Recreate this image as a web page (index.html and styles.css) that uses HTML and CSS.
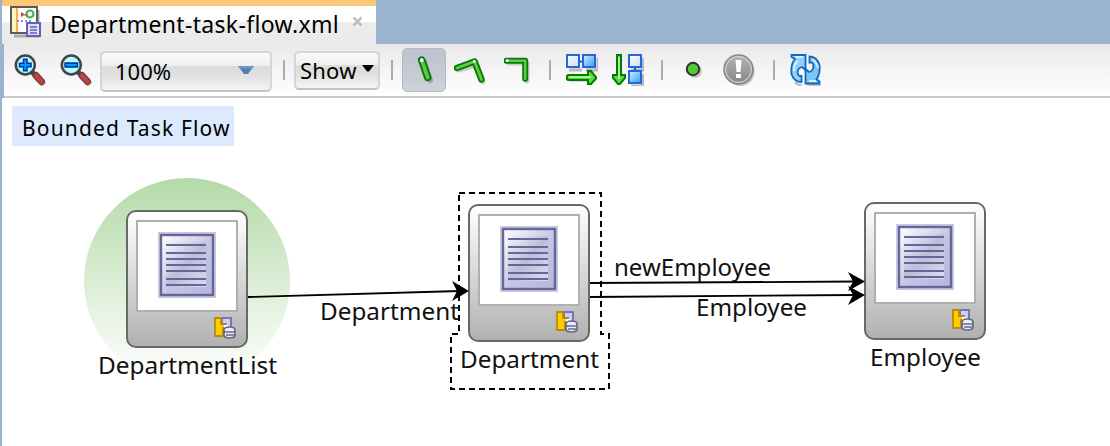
FILE: index.html
```html
<!DOCTYPE html>
<html lang="en">
<head>
<meta charset="utf-8">
<title>Department-task-flow.xml</title>
<link rel="stylesheet" href="styles.css">
</head>
<body>
<svg class="defs" aria-hidden="true">
  <defs>
    <linearGradient id="page" x1="0" y1="0" x2="1" y2="1"><stop offset="0" stop-color="#fff"/><stop offset=".55" stop-color="#c4c4e2"/><stop offset="1" stop-color="#b5b5df"/></linearGradient>
    <linearGradient id="lines" x1="0" y1="0" x2="1" y2="1"><stop offset="0" stop-color="#f5f5fc"/><stop offset=".5" stop-color="#bdbdda"/><stop offset="1" stop-color="#dcdcf0"/></linearGradient>
    <linearGradient id="blue" x1="0" y1="0" x2="1" y2="1"><stop offset="0" stop-color="#d8efff"/><stop offset="1" stop-color="#2d9dfa"/></linearGradient>
    <linearGradient id="pale" x1="0" y1="0" x2="1" y2="1"><stop offset="0" stop-color="#fff"/><stop offset="1" stop-color="#cbdcfb"/></linearGradient>
    <linearGradient id="grey" x1="0" y1="0" x2="0" y2="1"><stop offset="0" stop-color="#b5b5b5"/><stop offset="1" stop-color="#858585"/></linearGradient>
    <symbol id="document" viewBox="0 0 58 66">
      <rect width="58" height="66" fill="#c9c9e2"/>
      <rect x="3" y="3" width="52" height="60" fill="url(#page)" stroke="#666699" stroke-width="2.4"/>
      <rect x="8" y="10" width="40" height="45" fill="url(#lines)"/>
      <path d="M8 13h40M8 21h40M8 27h40M8 33h40M8 39h40M8 47h40M8 53h40" stroke="#666699" stroke-width="2"/>
    </symbol>
    <symbol id="badge" viewBox="0 0 22 22">
      <path d="M8 1h9v10H8z" fill="#ccccff" stroke="#7777aa" stroke-width="2"/>
      <path d="M1 1h6v6h5v4H9v8H1z" fill="#ffcc00" stroke="#b98a12" stroke-width="1.8"/>
      <path d="M10 8h4v5h-4z" fill="#fff"/>
      <path d="M10 13q0-3 5.500-3t5.500 3v5q0 3-5.500 3t-5.500-3z" fill="#ececf8" stroke="#66668c" stroke-width="1.700"/>
      <path d="M10 15h11M12 18h8" stroke="#66668c" stroke-width="1.500"/>
    </symbol>
    <symbol id="lens" viewBox="0 0 32 32">
      <path d="M21 22l9 9" stroke="#c0c0c0" stroke-width="6"/>
      <path d="M18 18l4 4" stroke="#444" stroke-width="5"/>
      <path d="M22 21.500l5.500 6" stroke="#6d3939" stroke-width="7" stroke-linecap="round"/><path d="M22 21.500l5.500 6" stroke="#bd4343" stroke-width="4.500" stroke-linecap="round"/>
      <circle cx="11.300" cy="11" r="9.500" fill="#b5fbff" stroke="#3d4545" stroke-width="2.500"/>
    </symbol>
  </defs>
</svg>
<div class="window">
  <header class="tabs">
    <div class="tab">
      <svg class="file-icon" viewBox="0 0 32 32">
        <path d="M4 30h24V4" fill="none" stroke="#aaa" stroke-width="3"/>
        <path d="M1 1h26v26H1z" fill="#fff" stroke="#5b5b5b" stroke-width="2"/>
        <path d="M2 2h5v24H2z" fill="#fff3b8"/><path d="M7 2v24" stroke="#f7aa5b" stroke-width="2"/>
        <path d="M11 6l4 2.500-4 2.500z" fill="#ec3a38"/><path d="M14 9l3-2v4z" fill="#ec3a38"/>
        <circle cx="20" cy="8" r="3.500" fill="#eaf9ea" stroke="#4db256" stroke-width="2.200"/>
        <path d="M7 15h14" stroke="#7793ee" stroke-width="2" stroke-dasharray="2 2"/>
        <path d="M17 17h13v13H17z" fill="#dedeff" stroke="#6262b0" stroke-width="2"/>
        <path d="M20 21h7M20 24h7M20 27h7" stroke="#6262b0" stroke-width="1.500"/>
      </svg>
      <span class="tab-title">Department-task-flow.xml</span>
      <svg class="close" viewBox="0 0 14 12"><path d="M2.500 1.500l8 8M10.500 1.500l-8 8" stroke="#bfbfbf" stroke-width="2.500"/></svg>
    </div>
  </header>

  <div class="toolbar">
    <svg class="icon zoom-in" viewBox="0 0 32 32">
      <use href="#lens"/>
      <path d="M11.300 4.500v13M4.800 11h13" stroke="#0036a5" stroke-width="5"/><path d="M11.300 6v10M6.300 11h10" stroke="#009fff" stroke-width="2"/>
    </svg>
    <svg class="icon zoom-out" viewBox="0 0 32 32">
      <use href="#lens"/>
      <path d="M4.300 11h14" stroke="#0036a5" stroke-width="5.500"/><path d="M5.800 11h11" stroke="#009fff" stroke-width="2"/>
    </svg>
    <div class="combo"><span class="combo-value">100%</span><svg class="combo-arrow" viewBox="0 0 16 8"><path d="M0 0h16l-6 8H6z" fill="#557db6"/><path d="M0 0h16l-2 2.500H2z" fill="#7196c6"/></svg></div>
    <i class="divider"></i>
    <div class="show"><span class="show-text">Show</span><svg class="show-arrow" viewBox="0 0 12 7"><path d="M0 0h12L7 6.500H5z"/></svg></div>
    <i class="divider"></i>
    <div class="selected">
      <svg class="icon stroke-icon" viewBox="0 0 32 32"><path d="M16 8l6 18" stroke="#9ba1ae" stroke-width="6"/><path d="M13.700 6l6 17.500" stroke="#087908" stroke-width="7.500"/><path d="M13.700 6l6 17.500" stroke="#5dc944" stroke-width="3.800"/><path d="M13.700 6v.5" stroke="#fff" stroke-width="3.500"/></svg>
    </div>
    <svg class="icon bend stroke-icon" viewBox="0 0 32 32"><path d="M5 16l18-5 6 17" stroke="#ccc" stroke-width="5"/><path d="M3 14l17.500-6.500L27.500 25.500" stroke="#087908" stroke-width="6.500"/><path d="M3 14l17.500-6.500L27.500 25.500" stroke="#5dcc43" stroke-width="2.800"/><path d="M20 7.500h.5" stroke="#fff" stroke-width="2.500"/></svg>
    <svg class="icon elbow stroke-icon" viewBox="0 0 32 32"><path d="M5 9h18v18" stroke="#ccc" stroke-width="5"/><path d="M2.500 6.800h18.700v18" stroke="#087908" stroke-width="6"/><path d="M2.500 6.800h18.700v18" stroke="#62ca43" stroke-width="2.500"/><path d="M3 6.500h.5" stroke="#fff" stroke-width="2.500"/></svg>
    <i class="divider d3"></i>
    <svg class="icon horizontal" viewBox="0 0 32 32">
      <path d="M3 16h13M20 16h12V4M4 26h20" stroke="#b8b8b8" stroke-width="3" fill="none"/>
      <path d="M12 7.500h8" stroke="#2759ca" stroke-width="2"/><path d="M1 1h12v12H1z" fill="url(#pale)" stroke="#2864db" stroke-width="2"/><path d="M17 1h12v12H17z" fill="url(#blue)" stroke="#2864db" stroke-width="2"/>
      <path d="M2 21h20v-4h3l5 6v1.500L25 30h-3v-4H2l-1-1v-3z" fill="#5ada3b" stroke="#087908" stroke-width="2"/><path d="M3 23h22" stroke="#beff9f" stroke-width="1.500"/>
    </svg>
    <svg class="icon vertical" viewBox="0 0 32 32">
      <path d="M19 16h12V4M19 32h12V20" stroke="#b8b8b8" stroke-width="3" fill="none"/>
      <path d="M23 12v8" stroke="#2759ca" stroke-width="2"/><path d="M17 1h12v12H17z" fill="url(#pale)" stroke="#2864db" stroke-width="2"/><path d="M17 17h12v12H17z" fill="url(#blue)" stroke="#2864db" stroke-width="2"/>
      <path d="M5 1h4v20h4v3l-5 6H6l-5-6v-3h4z" fill="#5ada3b" stroke="#087908" stroke-width="2"/><path d="M7 3v22" stroke="#beff9f" stroke-width="1.500"/>
    </svg>
    <i class="divider d4"></i>
    <svg class="dot" viewBox="0 0 18 18"><circle cx="10" cy="10" r="7" fill="#c6c6c6"/><circle cx="8" cy="8" r="6.200" fill="#55c935" stroke="#303030" stroke-width="2"/></svg>
    <svg class="icon alert" viewBox="0 0 32 32"><circle cx="17.500" cy="18" r="14" fill="#c4c4c4"/><circle cx="15.500" cy="15.500" r="14.500" fill="url(#grey)" stroke="#858585" stroke-width="1.500"/><circle cx="15.500" cy="15.500" r="12.800" fill="none" stroke="#d0d0d0" stroke-width="1.200"/><path d="M12.500 6h6l-1 12h-4zM13 20h5v4h-5z" fill="#fff"/></svg>
    <i class="divider d5"></i>
    <svg class="icon refresh" viewBox="0 0 32 32">
      <path d="M5 28q4 4 7 3.500M17 31.500h14" stroke="#c4c4c4" stroke-width="3" fill="none"/>
      <path d="M1.500 1H15.500V16L12 13Q8 14 7.500 18Q7.500 21 9.500 22H11.500V28Q4 28 1.500 20Q.5 10 5 5L1.500 3Z" fill="#8ed0fa" stroke="#1766bd" stroke-width="1.800"/>
      <path d="M29.500 29.500H15.500V15L19 18Q23 17 23.500 13Q23.500 9 21.500 8.500H19.500V2.500Q27 3 29.500 11Q30.500 20 26.500 25L29.500 27.500Z" fill="#7cc5f8" stroke="#1766bd" stroke-width="1.800"/>
      <path d="M5 3h8M4 17q-1-6 4-10M19 27h7M22 5q5 3 6 9" stroke="#d4f0ff" stroke-width="1.800" fill="none"/>
    </svg>
  </div>

  <main class="canvas">
    <div class="flow-title"><span>Bounded Task Flow</span></div>
    <div class="start"></div>
    <div class="node node-list"><div class="screen"><svg class="document"><use href="#document"/></svg></div><svg class="badge"><use href="#badge"/></svg></div>
    <div class="node node-department"><div class="screen"><svg class="document"><use href="#document"/></svg></div><svg class="badge"><use href="#badge"/></svg></div>
    <div class="node node-employee"><div class="screen"><svg class="document"><use href="#document"/></svg></div><svg class="badge"><use href="#badge"/></svg></div>
    <svg class="edges" viewBox="0 98 1110 348">
      <path class="selection" d="M459 193H601V334H609V389H451V334H459Z"/>
      <path class="edge" d="M248 297L460 291M590 283L856 281.500M590 297L856 295"/>
      <path d="M469 291L452 281L457 291L452 301ZM865 281.500L848 272L853 281.500L848 291ZM865 295L848 286L853 295L848 305Z"/>
      <g class="labels">
        <text x="98" y="373.500" textLength="179" lengthAdjust="spacingAndGlyphs">DepartmentList</text>
        <text x="460" y="367.500" textLength="139" lengthAdjust="spacingAndGlyphs">Department</text>
        <text x="870" y="365.500" textLength="111" lengthAdjust="spacingAndGlyphs">Employee</text>
        <text x="320" y="320" textLength="139" lengthAdjust="spacingAndGlyphs">Department</text>
        <text x="614" y="276" textLength="157" lengthAdjust="spacingAndGlyphs">newEmployee</text>
        <text x="696" y="316" textLength="111" lengthAdjust="spacingAndGlyphs">Employee</text>
      </g>
    </svg>
  </main>
</div>
</body>
</html>
```
FILE: styles.css
```css
* { box-sizing: border-box; }
body { margin: 0; font-family: "Noto Sans", "Open Sans", sans-serif; color: #000; }
svg { display: block; flex: none; }
.defs { position: absolute; width: 0; height: 0; }
.window { width: 1110px; height: 446px; padding-left: 2px; background: #9ab4d0; overflow: hidden; display: flex; flex-direction: column; }
.tabs { height: 44px; flex: none; }
.tab { width: 374px; height: 44px; display: flex; align-items: flex-start; padding-left: 8px; border-top: 6px solid #fac878; background: linear-gradient(#fff 0 16px, #ededed 16px, #e9e9e9 38px); border-radius: 2px 2px 0 0; }
.file-icon { width: 32px; height: 32px; }
.tab-title { margin: 2px 0 0 8px; width: 289px; font-size: 23px; line-height: 32px; white-space: nowrap; letter-spacing: .33px; }
.close { width: 14px; height: 12px; margin: 10px 0 0 12px; }
.toolbar { height: 54px; flex: none; margin-left: 2px; padding-left: 10px; display: flex; align-items: flex-start; background: linear-gradient(#e9e9e9, #fff); border-bottom: 2px solid #cbcbcb; }
.icon { width: 32px; height: 32px; margin-top: 10px; }
.stroke-icon { fill: none; stroke-linecap: round; stroke-linejoin: round; }
.zoom-out { margin-left: 14px; }
.combo, .show { display: flex; align-items: flex-start; flex: none; border: 2px solid #d5d5d5; border-bottom-color: #c2c2c2; border-radius: 5px; background: linear-gradient(#fafafa, #eee 35%, #dcdcdc 36%, #e0e0e0 60%, #f4f4f4); }
.combo { width: 172px; height: 41px; margin: 7px 0 0 8px; padding-left: 13px; }
.combo-value { width: 56px; margin-top: 3px; font-size: 22px; line-height: 30px; }
.combo-arrow { width: 16px; height: 8px; margin: 13px 0 0 67px; }
.divider { width: 2px; height: 20px; margin: 16px 0 0 11px; background: #acacac; flex: none; }
.show { width: 86px; height: 39px; margin: 7px 0 0 9px; padding-left: 4px; }
.show-text { width: 58px; margin-top: 2px; font-size: 22px; line-height: 30px; letter-spacing: .2px; }
.show-arrow { width: 12px; height: 7px; margin: 12px 0 0 4px; }
.selected { width: 44px; height: 44px; margin: 4px 0 0 9px; padding-left: 5px; flex: none; background: linear-gradient(#bcc2ce, #cdd2dc); border: 1px solid #b3b8c2; border-radius: 5px; }
.selected .icon { margin-top: 5px; }
.bend { margin-left: 8px; }
.elbow { margin-left: 18px; }
.d3 { margin-left: 13px; }
.horizontal { margin-left: 15px; }
.vertical { margin-left: 14px; }
.d4 { margin-left: 17px; }
.dot { width: 18px; height: 18px; margin: 17px 0 0 22px; }
.alert { margin-left: 20px; }
.d5 { margin-left: 18px; }
.refresh { margin-left: 15px; }
.canvas { position: relative; flex: 1; background: #fff; padding: 8px 0 0 10px; }
.flow-title { width: 222px; height: 40px; padding: 5px 0 0 10px; background: #dde9fd; font-size: 21px; line-height: 34px; white-space: nowrap; letter-spacing: 1.15px; }
.start { position: absolute; left: 82px; top: 80px; width: 206px; height: 206px; border-radius: 50%; background: linear-gradient(#b3daa8, #fff 97%); }
.node { position: absolute; width: 122px; height: 138px; padding: 8px; border: 2px solid #686868; border-radius: 10px; background: linear-gradient(#fff, #b1b1b1); }
.node-list { left: 124px; top: 112px; }
.node-department { left: 466px; top: 106px; }
.node-employee { left: 862px; top: 104px; }
.screen { width: 102px; height: 92px; padding: 10px 0 0 20px; border: 2px solid #b0b0b0; background: #fff; }
.document { width: 58px; height: 66px; }
.badge { width: 22px; height: 22px; margin: 5px 0 0 78px; }
.edges { position: absolute; left: -2px; top: 0; width: 1110px; height: 348px; }
.selection { fill: none; stroke: #000; stroke-width: 2; stroke-dasharray: 6 4; }
.edge { fill: none; stroke: #000; stroke-width: 1.8; }
.labels { font-size: 24px; fill: #111; }
```
